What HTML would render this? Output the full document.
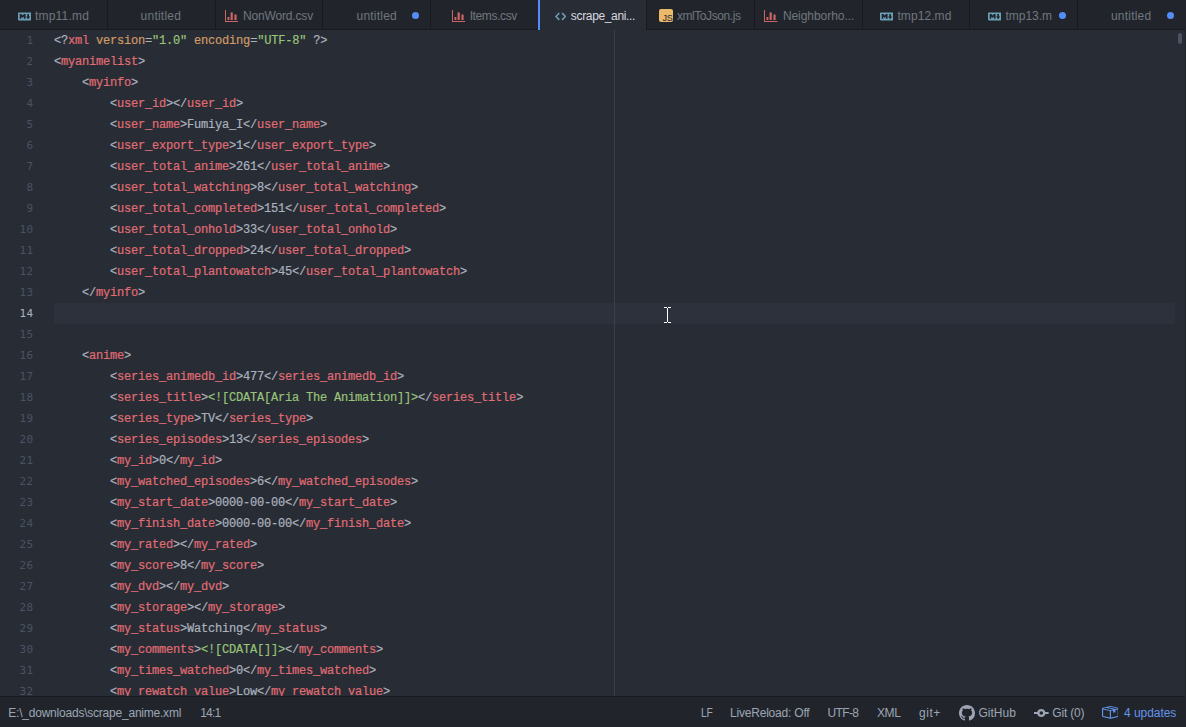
<!DOCTYPE html>
<html lang="en">
<head>
<meta charset="utf-8">
<title>scrape_anime.xml - Atom</title>
<style>
*{box-sizing:border-box;margin:0;padding:0}
html,body{width:1186px;height:727px;overflow:hidden;background:#282c34}
body{font-family:"Liberation Sans",sans-serif;font-size:12px;color:#9da5b4;position:relative}
/* ---------- tab bar ---------- */
.tabs{position:absolute;left:0;top:0;width:1186px;height:30px;background:#21252b;border-bottom:1px solid #181a1f;display:flex}
.tab{position:relative;flex:1 1 0;height:30px;border-right:1px solid #181a1f;color:#70767f;font-size:12px;line-height:30px;white-space:nowrap;overflow:hidden}
.tab:last-child{border-right:none}
.tab .t{position:absolute;top:1px;left:0;white-space:pre}
.tab svg,.tab .js{position:absolute}
.tab .dot{position:absolute;width:7.2px;height:7.2px;border-radius:50%;background:#548cf8;top:12.1px;margin-left:0.4px}
.tab.active{background:#282c34;color:#d7dae0;height:30px}
.abar{position:absolute;left:538px;top:0;width:2px;height:30px;background:#548cf8;z-index:3}
.tab .js{width:14px;height:13.5px;border-radius:2px;background:#ebb96a;color:#21252b;font-size:9px;line-height:9px;text-align:right;padding:5px 0.5px 0 0;letter-spacing:-0.3px;overflow:hidden}
.md{fill:#6a9fb5}.ch{fill:#cc6666}
/* ---------- editor ---------- */
.editor{position:absolute;left:0;top:30px;width:1186px;height:666px;overflow:hidden;background:#282c34}
.hl{position:absolute;left:54px;top:273px;width:1121px;height:21px;background:#2c313c}
.guide{position:absolute;left:614px;top:0;width:1px;height:666px;background:#3b4048}
.gutter{position:absolute;left:0;top:0;width:44px}
.code{position:absolute;left:54px;top:1px}
.ln,.l{height:21px;line-height:21px;white-space:pre;font-family:"Liberation Mono",monospace;font-size:12px;letter-spacing:-0.2px}
.ln{text-align:right;width:33.6px;color:#4b5263;font-size:11px;letter-spacing:0.38px;font-family:"DejaVu Sans Mono","Liberation Mono",monospace}
.ln.cur{color:#abb2bf}
.l{color:#abb2bf;-webkit-text-stroke:0.2px}
.r{color:#e06c75}.g{color:#98c379}.o{color:#d19a66}
.sb{position:absolute;left:1178px;top:3px;width:4px;height:11px;border-radius:2px;background:#4b5263}
.redge{position:absolute;left:1185px;top:0;width:1px;height:727px;background:#21252b;z-index:5}
/* ---------- status bar ---------- */
.status{position:absolute;left:0;top:696px;width:1186px;height:31px;background:#21252b;border-top:1px solid #181a1f;font-size:12px;line-height:31px;color:#9da5b4;white-space:nowrap}
.status span{position:absolute;top:1px;white-space:pre}
.status .nar{transform:scaleX(.86);transform-origin:0 50%}
.status .blue{color:#6494ed}
</style>
</head>
<body>
<div class="tabs">
  <div class="tab"><svg class="md" style="left:17.8px;top:9.6px" width="13.5" height="12.8" viewBox="0 0 16 16" preserveAspectRatio="none"><path d="M14.85 3H1.15C.52 3 0 3.52 0 4.15v7.69C0 12.48.52 13 1.15 13h13.69c.64 0 1.15-.52 1.15-1.15v-7.7C16 3.520 15.480 3 14.850 3zM9 11H7V8L5.500 9.920 4 8v3H2V5h2l1.500 2L7 5h2v6zm2.990.500L9.500 8H11V5h2v3h1.500l-2.510 3.500z"/></svg><span class="t" style="left:35px;letter-spacing:0.2px">tmp11.md</span></div>
  <div class="tab"><span class="t" style="left:32.78181818181818px;letter-spacing:0.22px">untitled</span></div>
  <div class="tab"><svg class="ch" style="left:8.9px;top:9.6px" width="13.4" height="12" viewBox="0 0 13.4 12"><rect x="0" y="0" width="1" height="12"/><rect x="0" y="11" width="13.4" height="1"/><rect x="2.5" y="7" width="1.9" height="3"/><rect x="5.6" y="2.4" width="2.2" height="7.6"/><rect x="9.4" y="4.5" width="2.2" height="5.5"/></svg><span class="t" style="left:27.3px;letter-spacing:-0.15px">NonWord.csv</span></div>
  <div class="tab"><span class="t" style="left:33.1px;letter-spacing:0.22px">untitled</span><i class="dot" style="left:88.0px"></i></div>
  <div class="tab"><svg class="ch" style="left:20.3px;top:9.6px" width="13.4" height="12" viewBox="0 0 13.4 12"><rect x="0" y="0" width="1" height="12"/><rect x="0" y="11" width="13.4" height="1"/><rect x="2.5" y="7" width="1.9" height="3"/><rect x="5.6" y="2.4" width="2.2" height="7.6"/><rect x="9.4" y="4.5" width="2.2" height="5.5"/></svg><span class="t" style="left:38.4px;letter-spacing:-0.37px">Items.csv</span></div>
  <div class="tab active"><svg class="md" style="left:15.6px;top:9.7px" width="11.4" height="12.8" viewBox="0 0 14 16" preserveAspectRatio="none"><path d="M9.5 3L8 4.500 11.500 8 8 11.500 9.500 13 14 8 9.500 3zm-5 0L0 8l4.500 5L6 11.500 2.500 8 6 4.500 4.500 3z"/></svg><span class="t" style="left:31.8px;letter-spacing:-0.35px">scrape_ani...</span></div>
  <div class="tab"><div class="js" style="left:12.0px;top:8.5px">JS</div><span class="t" style="left:30.0px;letter-spacing:-0.42px">xmlToJson.js</span></div>
  <div class="tab"><svg class="ch" style="left:9.8px;top:9.6px" width="13.4" height="12" viewBox="0 0 13.4 12"><rect x="0" y="0" width="1" height="12"/><rect x="0" y="11" width="13.4" height="1"/><rect x="2.5" y="7" width="1.9" height="3"/><rect x="5.6" y="2.4" width="2.2" height="7.6"/><rect x="9.4" y="4.5" width="2.2" height="5.5"/></svg><span class="t" style="left:28.2px;letter-spacing:-0.05px">Neighborho...</span></div>
  <div class="tab"><svg class="md" style="left:17.4px;top:9.6px" width="13.5" height="12.8" viewBox="0 0 16 16" preserveAspectRatio="none"><path d="M14.85 3H1.15C.52 3 0 3.52 0 4.15v7.69C0 12.48.52 13 1.15 13h13.69c.64 0 1.15-.52 1.15-1.15v-7.7C16 3.520 15.480 3 14.850 3zM9 11H7V8L5.500 9.920 4 8v3H2V5h2l1.500 2L7 5h2v6zm2.990.500L9.500 8H11V5h2v3h1.500l-2.510 3.500z"/></svg><span class="t" style="left:34.9px;letter-spacing:0.08px">tmp12.md</span></div>
  <div class="tab"><svg class="md" style="left:17.6px;top:9.6px" width="13.5" height="12.8" viewBox="0 0 16 16" preserveAspectRatio="none"><path d="M14.85 3H1.15C.52 3 0 3.52 0 4.15v7.69C0 12.48.52 13 1.15 13h13.69c.64 0 1.15-.52 1.15-1.15v-7.7C16 3.520 15.480 3 14.850 3zM9 11H7V8L5.500 9.920 4 8v3H2V5h2l1.500 2L7 5h2v6zm2.990.500L9.500 8H11V5h2v3h1.500l-2.510 3.500z"/></svg><span class="t" style="left:35.1px;letter-spacing:0px">tmp13.m</span><i class="dot" style="left:87.8px"></i></div>
  <div class="tab"><span class="t" style="left:32.8px;letter-spacing:0.22px">untitled</span><i class="dot" style="left:88.0px"></i></div>
  <div class="abar"></div>
</div>

<div class="editor">
  <div class="hl"></div>
  <div class="guide"></div>
  <div class="gutter">
<div class="ln">1</div><div class="ln">2</div><div class="ln">3</div><div class="ln">4</div><div class="ln">5</div><div class="ln">6</div><div class="ln">7</div><div class="ln">8</div><div class="ln">9</div><div class="ln">10</div><div class="ln">11</div><div class="ln">12</div><div class="ln">13</div><div class="ln cur">14</div><div class="ln">15</div><div class="ln">16</div><div class="ln">17</div><div class="ln">18</div><div class="ln">19</div><div class="ln">20</div><div class="ln">21</div><div class="ln">22</div><div class="ln">23</div><div class="ln">24</div><div class="ln">25</div><div class="ln">26</div><div class="ln">27</div><div class="ln">28</div><div class="ln">29</div><div class="ln">30</div><div class="ln">31</div><div class="ln">32</div>
  </div>
  <div class="code">
<div class="l">&lt;?<span class="r">xml</span> <span class="o">version</span>=<span class="g">"1.0"</span> <span class="o">encoding</span>=<span class="g">"UTF-8"</span> ?&gt;</div>
<div class="l">&lt;<span class="r">myanimelist</span>&gt;</div>
<div class="l">    &lt;<span class="r">myinfo</span>&gt;</div>
<div class="l">        &lt;<span class="r">user_id</span>&gt;&lt;/<span class="r">user_id</span>&gt;</div>
<div class="l">        &lt;<span class="r">user_name</span>&gt;Fumiya_I&lt;/<span class="r">user_name</span>&gt;</div>
<div class="l">        &lt;<span class="r">user_export_type</span>&gt;1&lt;/<span class="r">user_export_type</span>&gt;</div>
<div class="l">        &lt;<span class="r">user_total_anime</span>&gt;261&lt;/<span class="r">user_total_anime</span>&gt;</div>
<div class="l">        &lt;<span class="r">user_total_watching</span>&gt;8&lt;/<span class="r">user_total_watching</span>&gt;</div>
<div class="l">        &lt;<span class="r">user_total_completed</span>&gt;151&lt;/<span class="r">user_total_completed</span>&gt;</div>
<div class="l">        &lt;<span class="r">user_total_onhold</span>&gt;33&lt;/<span class="r">user_total_onhold</span>&gt;</div>
<div class="l">        &lt;<span class="r">user_total_dropped</span>&gt;24&lt;/<span class="r">user_total_dropped</span>&gt;</div>
<div class="l">        &lt;<span class="r">user_total_plantowatch</span>&gt;45&lt;/<span class="r">user_total_plantowatch</span>&gt;</div>
<div class="l">    &lt;/<span class="r">myinfo</span>&gt;</div>
<div class="l"> </div>
<div class="l"> </div>
<div class="l">    &lt;<span class="r">anime</span>&gt;</div>
<div class="l">        &lt;<span class="r">series_animedb_id</span>&gt;477&lt;/<span class="r">series_animedb_id</span>&gt;</div>
<div class="l">        &lt;<span class="r">series_title</span>&gt;<span class="g">&lt;![CDATA[Aria The Animation]]&gt;</span>&lt;/<span class="r">series_title</span>&gt;</div>
<div class="l">        &lt;<span class="r">series_type</span>&gt;TV&lt;/<span class="r">series_type</span>&gt;</div>
<div class="l">        &lt;<span class="r">series_episodes</span>&gt;13&lt;/<span class="r">series_episodes</span>&gt;</div>
<div class="l">        &lt;<span class="r">my_id</span>&gt;0&lt;/<span class="r">my_id</span>&gt;</div>
<div class="l">        &lt;<span class="r">my_watched_episodes</span>&gt;6&lt;/<span class="r">my_watched_episodes</span>&gt;</div>
<div class="l">        &lt;<span class="r">my_start_date</span>&gt;0000-00-00&lt;/<span class="r">my_start_date</span>&gt;</div>
<div class="l">        &lt;<span class="r">my_finish_date</span>&gt;0000-00-00&lt;/<span class="r">my_finish_date</span>&gt;</div>
<div class="l">        &lt;<span class="r">my_rated</span>&gt;&lt;/<span class="r">my_rated</span>&gt;</div>
<div class="l">        &lt;<span class="r">my_score</span>&gt;8&lt;/<span class="r">my_score</span>&gt;</div>
<div class="l">        &lt;<span class="r">my_dvd</span>&gt;&lt;/<span class="r">my_dvd</span>&gt;</div>
<div class="l">        &lt;<span class="r">my_storage</span>&gt;&lt;/<span class="r">my_storage</span>&gt;</div>
<div class="l">        &lt;<span class="r">my_status</span>&gt;Watching&lt;/<span class="r">my_status</span>&gt;</div>
<div class="l">        &lt;<span class="r">my_comments</span>&gt;<span class="g">&lt;![CDATA[]]&gt;</span>&lt;/<span class="r">my_comments</span>&gt;</div>
<div class="l">        &lt;<span class="r">my_times_watched</span>&gt;0&lt;/<span class="r">my_times_watched</span>&gt;</div>
<div class="l">        &lt;<span class="r">my_rewatch_value</span>&gt;Low&lt;/<span class="r">my_rewatch_value</span>&gt;</div>
  </div>
  <svg style="position:absolute;left:664px;top:277px" width="7" height="16" viewBox="0 0 7 16" shape-rendering="crispEdges"><g fill="#ffffff"><rect x="0" y="0" width="3" height="1"/><rect x="4" y="0" width="3" height="1"/><rect x="3" y="1" width="1" height="14"/><rect x="0" y="15" width="3" height="1"/><rect x="4" y="15" width="3" height="1"/></g></svg>
  <div class="sb"></div>
</div>

<div class="status">
  <span style="left:8.3px;letter-spacing:-0.22px">E:\_downloads\scrape_anime.xml</span>
  <span style="left:200.3px;letter-spacing:-0.85px">14:1</span>
  <span class="nar" style="left:701.2px;letter-spacing:-0.2px">LF</span>
  <span style="left:730px;letter-spacing:-0.2px">LiveReload: Off</span>
  <span style="left:827.5px;letter-spacing:-0.65px">UTF-8</span>
  <span style="left:877px;letter-spacing:-0.4px">XML</span>
  <span style="left:919px;letter-spacing:0.55px">git+</span>
  <svg style="position:absolute;left:959px;top:8px;fill:#9da5b4" width="16" height="16" viewBox="0 0 16 16"><path d="M8 0C3.58 0 0 3.58 0 8c0 3.54 2.29 6.53 5.47 7.59.4.07.55-.17.55-.38 0-.19-.01-.82-.01-1.49-2.01.37-2.53-.49-2.69-.94-.09-.23-.48-.94-.82-1.13-.28-.15-.68-.52-.01-.53.63-.01 1.08.58 1.23.82.72 1.21 1.87.87 2.33.66.07-.52.28-.87.51-1.07-1.78-.2-3.64-.89-3.64-3.95 0-.87.31-1.59.82-2.15-.08-.2-.36-1.02.08-2.12 0 0 .67-.21 2.2.82.64-.18 1.32-.27 2-.27.68 0 1.36.09 2 .27 1.53-1.04 2.2-.82 2.2-.82.44 1.1.16 1.92.08 2.12.51.56.82 1.27.82 2.15 0 3.07-1.87 3.75-3.65 3.95.29.25.54.73.54 1.48 0 1.07-.01 1.93-.01 2.2 0 .21.15.46.55.38A8.013 8.013 0 0 0 16 8c0-4.42-3.58-8-8-8z"/></svg>
  <span style="left:978.5px;letter-spacing:0px">GitHub</span>
  <svg style="position:absolute;left:1034px;top:8px;fill:#9da5b4" width="14.6" height="16" viewBox="0 0 14 16" preserveAspectRatio="none"><path fill-rule="evenodd" d="M0 7h3.130a4 4 0 0 1 7.740 0H14v2h-3.130a4 4 0 0 1-7.740 0H0zM7 6.300a1.700 1.700 0 1 0 0 3.400 1.700 1.700 0 0 0 0-3.400z"/></svg>
  <span style="left:1052.3px;letter-spacing:-0.2px">Git (0)</span>
  <svg style="position:absolute;left:1102.3px;top:8.9px;fill:#6494ed" width="15.7" height="12.7" viewBox="1 1.5 14 13" preserveAspectRatio="none"><path d="M1 4.270v7.470c0 .450.300.840.750.970l6.500 1.730c.160.050.340.050.500 0l6.500-1.730c.450-.130.750-.520.750-.970V4.270c0-.450-.300-.840-.750-.970l-6.500-1.740a1.400 1.400 0 0 0-.500 0L1.750 3.300C1.300 3.430 1 3.820 1 4.270zm7 9.090l-6-1.590V5l6 1.610v6.750zM2 4l2.500-.67L11 5.060l-2.500.67L2 4zm13 7.770l-6 1.590V6.610l2-.55V8.500l2-.53V5.530L15 5v6.770zm-2-7.240L6.500 2.800l2-.53L15 4l-2 .53z"/></svg>
  <span class="blue" style="left:1124px;letter-spacing:-0.05px">4 updates</span>
</div>
<div class="redge"></div>
</body>
</html>
